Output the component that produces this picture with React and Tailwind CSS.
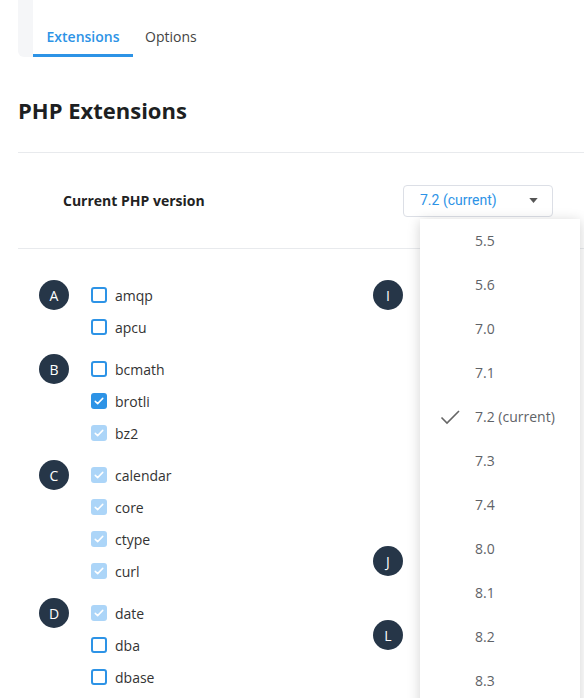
import React from 'react';

const LEFT = [
  { letter: 'A', items: [['amqp', 'off'], ['apcu', 'off']] },
  { letter: 'B', items: [['bcmath', 'off'], ['brotli', 'on'], ['bz2', 'locked']] },
  {
    letter: 'C',
    items: [['calendar', 'locked'], ['core', 'locked'], ['ctype', 'locked'], ['curl', 'locked']],
  },
  { letter: 'D', items: [['date', 'locked'], ['dba', 'off'], ['dbase', 'off']] },
];

// right column sits behind the open dropdown, only the letters show
const RIGHT = [
  { letter: 'I', items: ['locked', 'off', 'off', 'off', 'off', 'off', 'off', 'off'] },
  { letter: 'J', items: ['locked', 'off'] },
  { letter: 'L', items: ['off'] },
];

const VERSIONS = ['5.5', '5.6', '7.0', '7.1', '7.2 (current)', '7.3', '7.4', '8.0', '8.1', '8.2', '8.3'];

const Check = ({ state }) => {
  if (state === 'off') {
    return <span className="w-4 h-4 rounded-[3px] border-2 border-[#2d93e6] bg-white shrink-0" />;
  }
  return (
    <span
      className={`w-4 h-4 rounded-[3px] shrink-0 flex items-center justify-center ${
        state === 'on' ? 'bg-[#2d93e6]' : 'bg-[#acd5f8]'
      }`}
    >
      <svg viewBox="0 0 16 16" className="w-3 h-3" fill="none" stroke="white" strokeWidth="2">
        <path d="M3 8.5l3.2 3L13 4.5" strokeLinecap="round" strokeLinejoin="round" />
      </svg>
    </span>
  );
};

const Letter = ({ letter }) => (
  <div className="w-[30px] h-[32px] flex items-center shrink-0">
    <span className="w-[30px] h-[30px] rounded-full bg-[#263648] text-white text-[14px] flex items-center justify-center">
      {letter}
    </span>
  </div>
);

const Group = ({ letter, items }) => (
  <div className="flex">
    <Letter letter={letter} />
    <div className="ml-[22px] flex flex-col">
      {items.map(([name, state]) => (
        <label key={name} className="h-[32px] flex items-center gap-2 text-[14px] text-[#333]">
          <Check state={state} />
          <span>{name}</span>
        </label>
      ))}
    </div>
  </div>
);

const HiddenGroup = ({ letter, items }) => (
  <div className="flex">
    <Letter letter={letter} />
    <div className="ml-[22px] flex flex-col">
      {items.map((state, i) => (
        <div key={i} className="h-[32px] flex items-center">
          <Check state={state} />
        </div>
      ))}
    </div>
  </div>
);

export default function App() {
  return (
    <div className="bg-white min-h-screen text-[#333]" style={{ fontFamily: '"Open Sans", sans-serif' }}>
      <div className="pl-[18px]">
        <div className="flex h-[57px]">
          <div className="w-[15px] h-[57px] bg-[#f5f6f8] rounded-bl-md" />
          <button className="h-[57px] w-[100px] px-[13px] pt-[18px] text-[14px] font-semibold text-[#2d93e6] border-b-[3px] border-[#2d93e6]">
            Extensions
          </button>
          <button className="h-[57px] pl-[12px] pt-[18px] border-b-[3px] border-transparent text-[14px] text-[#444]">
            Options
          </button>
        </div>

        <h1 className="mt-[38px] text-[22px] leading-[30px] font-bold text-[#1d1f22]">PHP Extensions</h1>

        <div className="mt-[27px] border-t border-[#e8eaed]" />

        <div className="h-[95px] flex items-center justify-between pl-[45px] pr-[31px]">
          <span className="text-[14px] font-bold text-[#222]">Current PHP version</span>
          <div className="relative">
            <div
              className="w-[150px] h-[32px] rounded border border-[#dcdfe6] flex items-center justify-between pl-[16px] pr-[14px] text-[14px] text-[#2d93e6]"
              style={{ fontFamily: 'Roboto, sans-serif' }}
            >
              <span>7.2 (current)</span>
              <svg viewBox="0 0 10 6" className="w-[9px] h-[5px]" fill="#555">
                <path d="M0 0h10L5 6z" />
              </svg>
            </div>
            <div className="absolute left-[17px] top-[34px] w-[160px] bg-white shadow-[0_2px_12px_rgba(0,0,0,0.18)] z-10 pb-2">
              {VERSIONS.map((v) => (
                <div key={v} className="relative h-[44px] flex items-center pl-[55px] text-[14px] text-[#5f6368]">
                  {v.includes('current') && (
                    <svg
                      viewBox="0 0 24 24"
                      className="absolute left-[18px] top-1/2 -translate-y-1/2 w-[24px] h-[24px]"
                      fill="none"
                      stroke="#666"
                      strokeWidth="1.6"
                    >
                      <path d="M3.5 12.5l5.5 5.5L21 6" />
                    </svg>
                  )}
                  {v}
                </div>
              ))}
            </div>
          </div>
        </div>

        <div className="border-t border-[#e8eaed]" />

        <div className="pl-[21px] pt-[30px] grid grid-cols-[334px_1fr]">
          <div className="flex flex-col gap-[10px]">
            {LEFT.map((g) => (
              <Group key={g.letter} {...g} />
            ))}
          </div>
          <div className="flex flex-col gap-[10px]">
            {RIGHT.map((g) => (
              <HiddenGroup key={g.letter} {...g} />
            ))}
          </div>
        </div>
      </div>
    </div>
  );
}
